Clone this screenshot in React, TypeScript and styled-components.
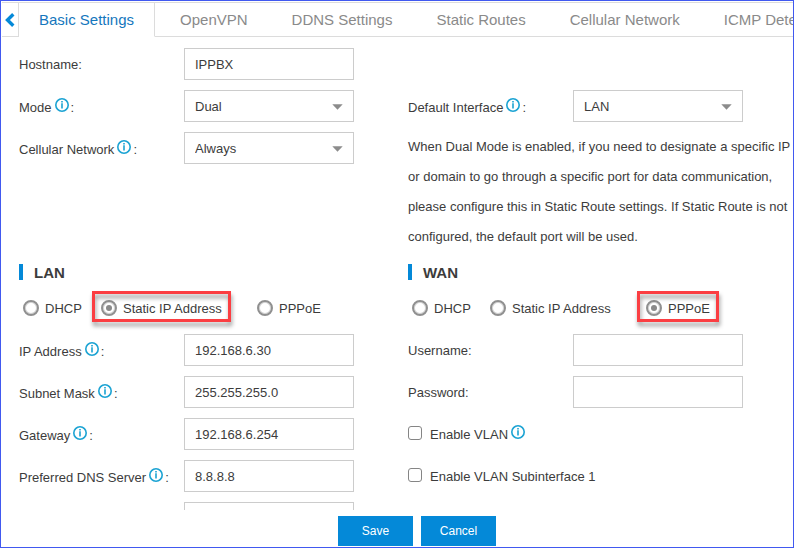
import React, { useId, useState } from "react";
import styled, { createGlobalStyle, css } from "styled-components";

const color = {
  frame: "#4159f0",
  line: "#dcdcdc",
  field: "#cccccc",
  text: "#3c3c3c",
  muted: "#8a8a8a",
  accent: "#0489d8",
  info: "#1ba3d3",
  mark: "#fb3e42",
};

const GlobalStyle = createGlobalStyle`
  *, *::before, *::after { box-sizing: border-box; }
  body { margin: 0; background: #fff; }
  body, button, input, select {
    font-family: "Liberation Sans", Arial, sans-serif;
    font-size: 13px;
    color: ${color.text};
  }
`;

const Frame = styled.main`
  display: flex;
  flex-direction: column;
  height: 100vh;
  border: 1px solid ${color.frame};
  overflow: hidden;
`;

const TabBar = styled.nav`
  display: flex;
  flex: none;
  height: 35px;
  margin: 1px 0 0 1px;
  border-top: 1px solid ${color.line};
  overflow: hidden;
`;

const BackButton = styled.button`
  flex: none;
  display: flex;
  align-items: center;
  justify-content: center;
  width: 17px;
  padding: 0 1px 0 0;
  border: 0;
  border-right: 1px solid ${color.line};
  border-bottom: 1px solid ${color.line};
  background: #fff;
`;

const Tabs = styled.div`
  display: flex;
  flex: 1;
  min-width: 0;
`;

const Tab = styled.button<{ $active?: boolean }>`
  flex: none;
  padding: 0 22px;
  border: 0;
  border-bottom: 1px solid ${color.line};
  background: #fff;
  color: ${color.muted};
  font-size: 15px;
  white-space: nowrap;

  ${(p) =>
    p.$active &&
    css`
      padding: 0 20px;
      border-right: 1px solid ${color.line};
      border-bottom-color: transparent;
      color: #1577bd;
    `}

  &:nth-child(2) {
    padding-left: 25px;
  }
`;

const TabFill = styled.div`
  flex: 1;
  border-bottom: 1px solid ${color.line};
`;

const Content = styled.form`
  flex: 1;
  min-height: 0;
  padding: 6px 0 0 18px;
  overflow: hidden;
`;

const Columns = styled.div`
  display: grid;
  grid-template-columns: 1fr 1fr;
  column-gap: 4px;
`;

const Column = styled.section`
  min-width: 0;
`;

const Row = styled.div`
  display: flex;
  align-items: center;
  height: 42px;
`;

const Label = styled.label<{ $info?: boolean }>`
  flex: none;
  display: flex;
  align-items: center;
  width: 165px;
  padding-top: ${(p) => (p.$info ? 2 : 0)}px;
  white-space: nowrap;
`;

const InfoSvg = styled.svg`
  flex: none;
  width: 14px;
  height: 14px;
  margin: 0 2px 4px 3px;
`;

const fieldStyle = css`
  width: 100%;
  height: 32px;
  padding: 0 10px;
  border: 1px solid ${color.field};
  border-radius: 0;
  background: #fff;
  outline: none;
`;

const FieldBox = styled.div`
  position: relative;
  width: 170px;
`;

const Input = styled.input`
  ${fieldStyle}
`;

const Select = styled.select`
  ${fieldStyle}
  appearance: none;
`;

const Arrow = styled.svg`
  position: absolute;
  top: 14px;
  right: 11px;
  width: 11px;
  height: 6px;
  pointer-events: none;
`;

const Note = styled.p`
  margin: 0;
  padding-top: 5px;
  line-height: 30px;
`;

const Heading = styled.h2`
  display: flex;
  align-items: center;
  gap: 11px;
  height: 40px;
  margin: 0 0 1px;
  font-size: 15px;
  font-weight: bold;

  &::before {
    content: "";
    width: 4px;
    height: 16px;
    background: ${color.accent};
  }
`;

const RadioGroup = styled.div`
  display: grid;
  grid-template-columns: 78px 156px auto;
  justify-content: start;
  align-items: center;
  height: 30px;
  margin-bottom: 6px;
  padding-left: 4px;
`;

const Option = styled.label<{ $marked?: boolean }>`
  position: relative;
  display: flex;
  align-items: center;
  gap: 6px;
  justify-self: start;
  white-space: nowrap;

  ${(p) =>
    p.$marked &&
    css`
      &::after {
        content: "";
        position: absolute;
        inset: -9px -9px -5px -9px;
        border: 3px solid ${color.mark};
        filter: drop-shadow(1px 4px 2px rgba(0, 0, 0, 0.4));
        pointer-events: none;
      }
    `}
`;

const Radio = styled.input`
  appearance: none;
  display: grid;
  place-items: center;
  width: 16px;
  height: 16px;
  margin: 0 0 1px;
  border: 2px solid #909090;
  border-radius: 50%;
  background: #fff;
  box-shadow: inset 0 0 0 1px #d4d4d4;

  &:checked::before {
    content: "";
    width: 6px;
    height: 6px;
    border-radius: 50%;
    background: #8a8a8a;
  }
`;

const Check = styled.input`
  appearance: none;
  width: 14px;
  height: 14px;
  margin: 0 8px 2px 0;
  border: 1px solid #858585;
  border-radius: 3px;
  background: #fff;

  &:checked {
    background: ${color.accent};
  }
`;

const CheckLabel = styled.label`
  display: flex;
  align-items: center;
`;

const Footer = styled.footer`
  flex: none;
  display: flex;
  justify-content: center;
  gap: 8px;
  padding: 6px 0 1px 40px;
`;

const ActionButton = styled.button`
  width: 75px;
  height: 30px;
  padding: 0;
  border: 0;
  background: ${color.accent};
  color: #fff;
  font-size: 12px;
`;

function InfoIcon() {
  return (
    <InfoSvg viewBox="0 0 14 14" aria-hidden="true">
      <circle cx="7" cy="7" r="6.2" fill="none" stroke={color.info} strokeWidth="1.6" />
      <path d="M7 3v1.4M7 5.2v5.4" fill="none" stroke={color.info} strokeWidth="1.6" />
    </InfoSvg>
  );
}

function FieldRow({ label, info, children }: {
  label: string;
  info?: boolean;
  children: (id: string) => React.ReactNode;
}) {
  const id = useId();
  return (
    <Row>
      <Label htmlFor={id} $info={info}>
        {info ? (
          <>
            {label}
            <InfoIcon />:
          </>
        ) : (
          `${label}:`
        )}
      </Label>
      <FieldBox>{children(id)}</FieldBox>
    </Row>
  );
}

function TextRow({ label, info, value = "", type = "text" }: {
  label: string;
  info?: boolean;
  value?: string;
  type?: string;
}) {
  return (
    <FieldRow label={label} info={info}>
      {(id) => <Input id={id} type={type} defaultValue={value} />}
    </FieldRow>
  );
}

function SelectRow({ label, value, options }: { label: string; value: string; options: string[] }) {
  return (
    <FieldRow label={label} info>
      {(id) => (
        <>
          <Select id={id} defaultValue={value}>
            {options.map((o) => (
              <option key={o}>{o}</option>
            ))}
          </Select>
          <Arrow viewBox="0 0 11 6" aria-hidden="true">
            <path d="M0.3 0.3h10.4L5.5 5.7z" fill="#8c8c8c" />
          </Arrow>
        </>
      )}
    </FieldRow>
  );
}

function AddressMode({ name, initial }: { name: string; initial: string }) {
  const [mode, setMode] = useState(initial);
  return (
    <RadioGroup role="radiogroup" aria-label={`${name} address mode`}>
      {["DHCP", "Static IP Address", "PPPoE"].map((m) => (
        <Option key={m} $marked={m === initial}>
          <Radio type="radio" name={name} checked={mode === m} onChange={() => setMode(m)} />
          {m}
        </Option>
      ))}
    </RadioGroup>
  );
}

const tabs = [
  "Basic Settings",
  "OpenVPN",
  "DDNS Settings",
  "Static Routes",
  "Cellular Network",
  "ICMP Detection",
];

export default function App() {
  return (
    <>
      <GlobalStyle />
      <Frame>
        <TabBar>
          <BackButton type="button" aria-label="Previous tabs">
            <svg width="10" height="14" viewBox="0 0 10 14" aria-hidden="true">
              <path d="M8.3 1.3L2.5 7l5.8 5.7" fill="none" stroke={color.accent} strokeWidth="3.4" />
            </svg>
          </BackButton>
          <Tabs>
            {tabs.map((t, i) => (
              <Tab key={t} type="button" $active={i === 0}>
                {t}
              </Tab>
            ))}
            <TabFill />
          </Tabs>
        </TabBar>
        <Content>
          <Columns>
            <Column>
              <TextRow label="Hostname" value="IPPBX" />
              <SelectRow label="Mode" value="Dual" options={["Single", "Dual", "Bridge"]} />
              <SelectRow label="Cellular Network" value="Always" options={["Always", "Backup"]} />
            </Column>
            <Column>
              <Row />
              <SelectRow label="Default Interface" value="LAN" options={["LAN", "WAN"]} />
              <Note>
                When Dual Mode is enabled, if you need to designate a specific IP or domain to go
                through a specific port for data communication, please configure this in Static
                Route settings. If Static Route is not configured, the default port will be used.
              </Note>
            </Column>
          </Columns>
          <Columns>
            <Column>
              <Heading>LAN</Heading>
              <AddressMode name="LAN" initial="Static IP Address" />
              <TextRow label="IP Address" info value="192.168.6.30" />
              <TextRow label="Subnet Mask" info value="255.255.255.0" />
              <TextRow label="Gateway" info value="192.168.6.254" />
              <TextRow label="Preferred DNS Server" info value="8.8.8.8" />
              <TextRow label="Alternate DNS Server" info />
            </Column>
            <Column>
              <Heading>WAN</Heading>
              <AddressMode name="WAN" initial="PPPoE" />
              <TextRow label="Username" />
              <TextRow label="Password" type="password" />
              <Row>
                <CheckLabel>
                  <Check type="checkbox" />
                  Enable VLAN
                  <InfoIcon />
                </CheckLabel>
              </Row>
              <Row>
                <CheckLabel>
                  <Check type="checkbox" />
                  Enable VLAN Subinterface 1
                </CheckLabel>
              </Row>
            </Column>
          </Columns>
        </Content>
        <Footer>
          <ActionButton type="button">Save</ActionButton>
          <ActionButton type="button">Cancel</ActionButton>
        </Footer>
      </Frame>
    </>
  );
}
